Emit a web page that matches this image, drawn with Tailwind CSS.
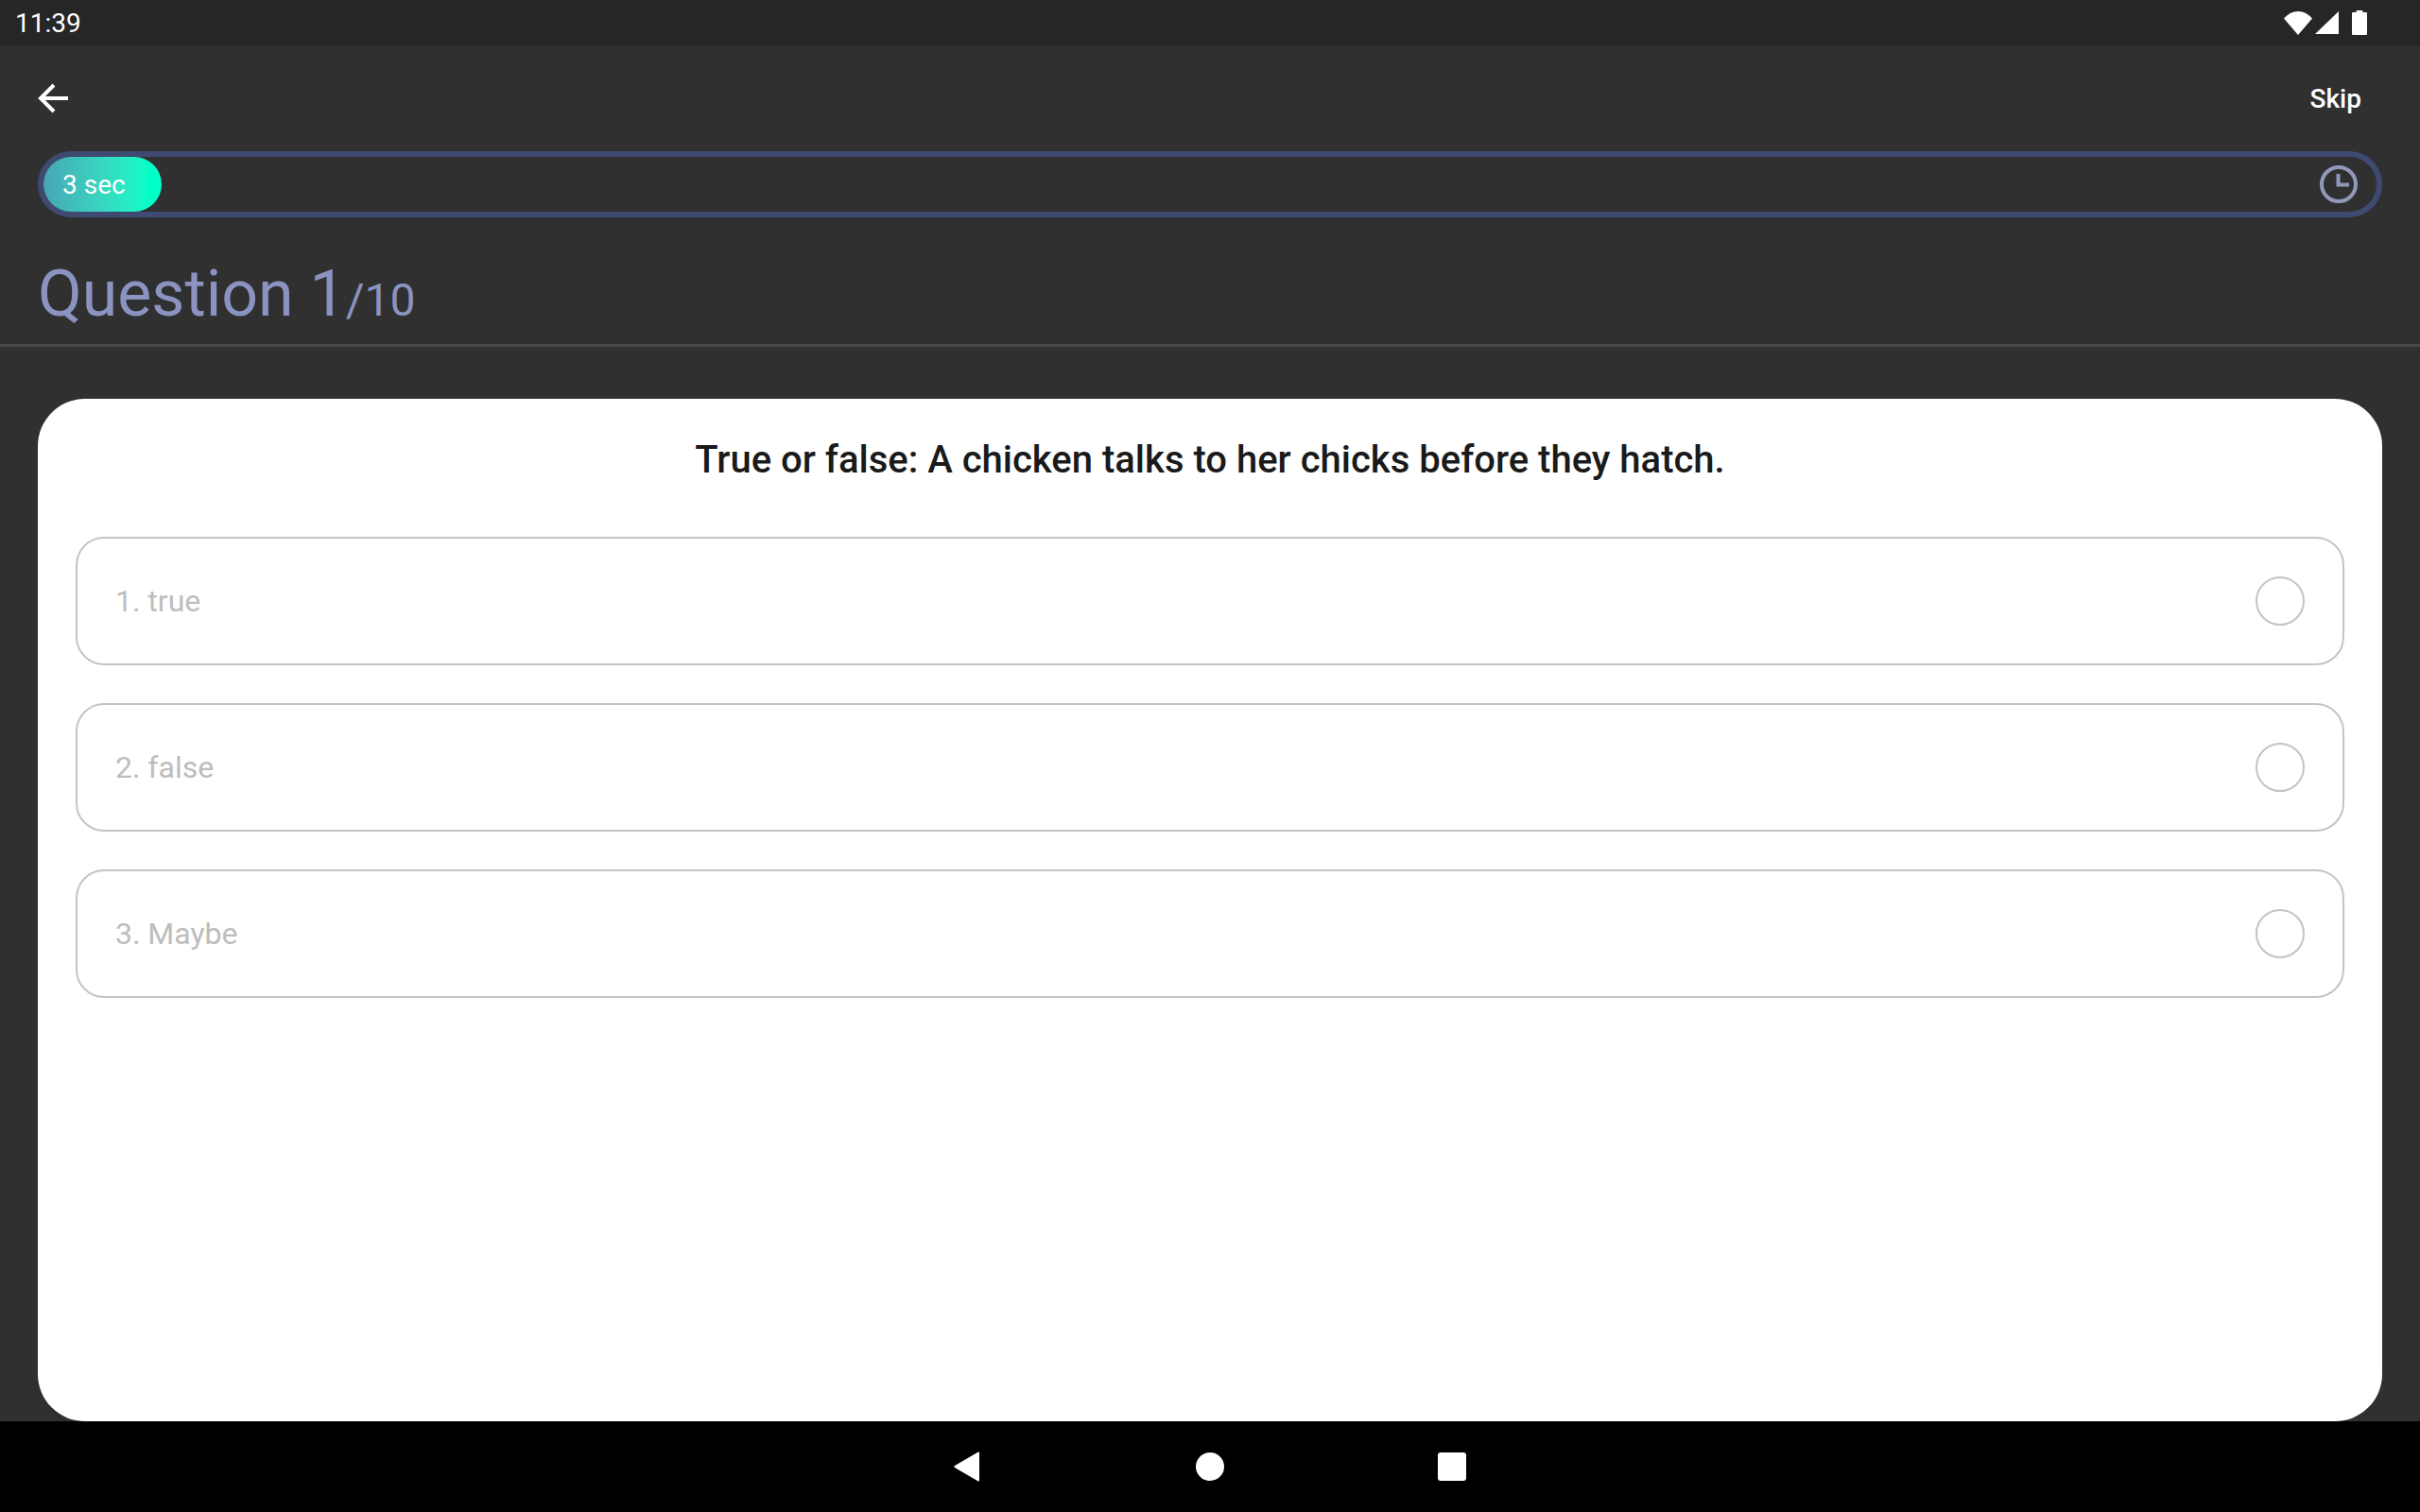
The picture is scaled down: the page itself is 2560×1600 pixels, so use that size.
<!DOCTYPE html>
<html lang="en">
<head>
  <meta charset="UTF-8" />
  <title>Question</title>
  <script src="https://cdn.jsdelivr.net/npm/@tailwindcss/browser@4"></script>
</head>
<body class="w-[2560px] h-[1600px] overflow-hidden flex flex-col bg-[#303030] font-['Roboto',sans-serif]">
  <!-- status bar -->
  <div class="h-[48px] shrink-0 bg-[#262626] flex items-center justify-between pl-[16px] pr-[56px] text-white">
    <span class="text-[28px] leading-none pt-[2px]">11:39</span>
    <div class="flex items-center">
      <svg width="30" height="25" viewBox="0 0 30 25" class="mr-[3px]"><path d="M0 7.5C4 3 9 0 15 0s11 3 15 7.5L15 25z" fill="#fff"/></svg>
      <svg width="25" height="24" viewBox="0 0 25 24" class="mr-[14px]"><path d="M25 0v24H0z" fill="#fff"/></svg>
      <svg width="16" height="26" viewBox="0 0 16 26"><path d="M4.5 2V1a1 1 0 0 1 1-1h5a1 1 0 0 1 1 1v1H15a1 1 0 0 1 1 1v22a1 1 0 0 1-1 1H1a1 1 0 0 1-1-1V3a1 1 0 0 1 1-1z" fill="#fff"/></svg>
    </div>
  </div>

  <!-- top bar -->
  <div class="h-[112px] shrink-0 flex items-center justify-between pl-[40px] pr-[62px]">
    <svg width="32" height="32" viewBox="0 0 32 32" fill="none" stroke="#fff" stroke-width="4"><path d="M32 16H3M17 2L3 16l14 14"/></svg>
    <span class="text-[28px] font-medium text-white pt-[1px]">Skip</span>
  </div>

  <!-- timer -->
  <div class="mx-[40px] h-[70px] shrink-0 rounded-full border-[6px] border-[#3f4a72] flex items-center justify-between">
    <div class="w-[125px] h-[58px] rounded-full bg-gradient-to-r from-[#46a6b4] to-[#00ffc8] to-90% flex items-center pl-[20px] pt-[1px] text-[28px] text-white">3 sec</div>
    <svg width="44" height="44" viewBox="0 0 44 44" fill="none" stroke="#9298ba" stroke-width="4" class="mr-[18px]"><circle cx="22" cy="22" r="18"/><path d="M21.5 11v11.5H33"/></svg>
  </div>

  <!-- heading -->
  <div class="h-[84px] mt-[39px] shrink-0 pl-[40px] flex items-baseline text-[#8b93c0]">
    <span class="text-[68px] leading-[84px]">Question 1</span><span class="text-[48px]">/10</span>
  </div>
  <div class="mt-[11px] h-[3px] shrink-0 bg-[#4a4a4a]"></div>

  <!-- card -->
  <div class="mx-[40px] mt-[55px] h-[1082px] shrink-0 bg-white rounded-[50px] px-[40px] pt-[37px]">
    <h1 class="text-[40px] leading-[56px] font-medium text-center text-[#1a1a1a]">True or false: A chicken talks to her chicks before they hatch.</h1>
    <div class="mt-[53px] flex flex-col gap-[40px]">
      <div class="h-[136px] rounded-[30px] border-2 border-[#c4c4c4] flex items-center justify-between pl-[40px] pr-[40px] text-[32px] text-[#bdbdbd]">
        <span>1. true</span>
        <span class="w-[52px] h-[52px] rounded-full border-2 border-[#c4c4c4]"></span>
      </div>
      <div class="h-[136px] rounded-[30px] border-2 border-[#c4c4c4] flex items-center justify-between pl-[40px] pr-[40px] text-[32px] text-[#bdbdbd]">
        <span>2. false</span>
        <span class="w-[52px] h-[52px] rounded-full border-2 border-[#c4c4c4]"></span>
      </div>
      <div class="h-[136px] rounded-[30px] border-2 border-[#c4c4c4] flex items-center justify-between pl-[40px] pr-[40px] text-[32px] text-[#bdbdbd]">
        <span>3. Maybe</span>
        <span class="w-[52px] h-[52px] rounded-full border-2 border-[#c4c4c4]"></span>
      </div>
    </div>
  </div>

  <!-- nav bar -->
  <div class="flex-1 bg-black flex items-center justify-center gap-[226px]">
    <svg width="28" height="32" viewBox="0 0 28 32" class="mr-[2px] ml-[-1px]"><path d="M27 1.5v29a1 1 0 0 1-1.6.8L1 17a1.2 1.2 0 0 1 0-2L25.4.7A1 1 0 0 1 27 1.5z" fill="#fff"/></svg>
    <span class="w-[30px] h-[30px] rounded-full bg-white"></span>
    <span class="w-[30px] h-[30px] rounded-[3px] bg-white"></span>
  </div>
</body>
</html>
